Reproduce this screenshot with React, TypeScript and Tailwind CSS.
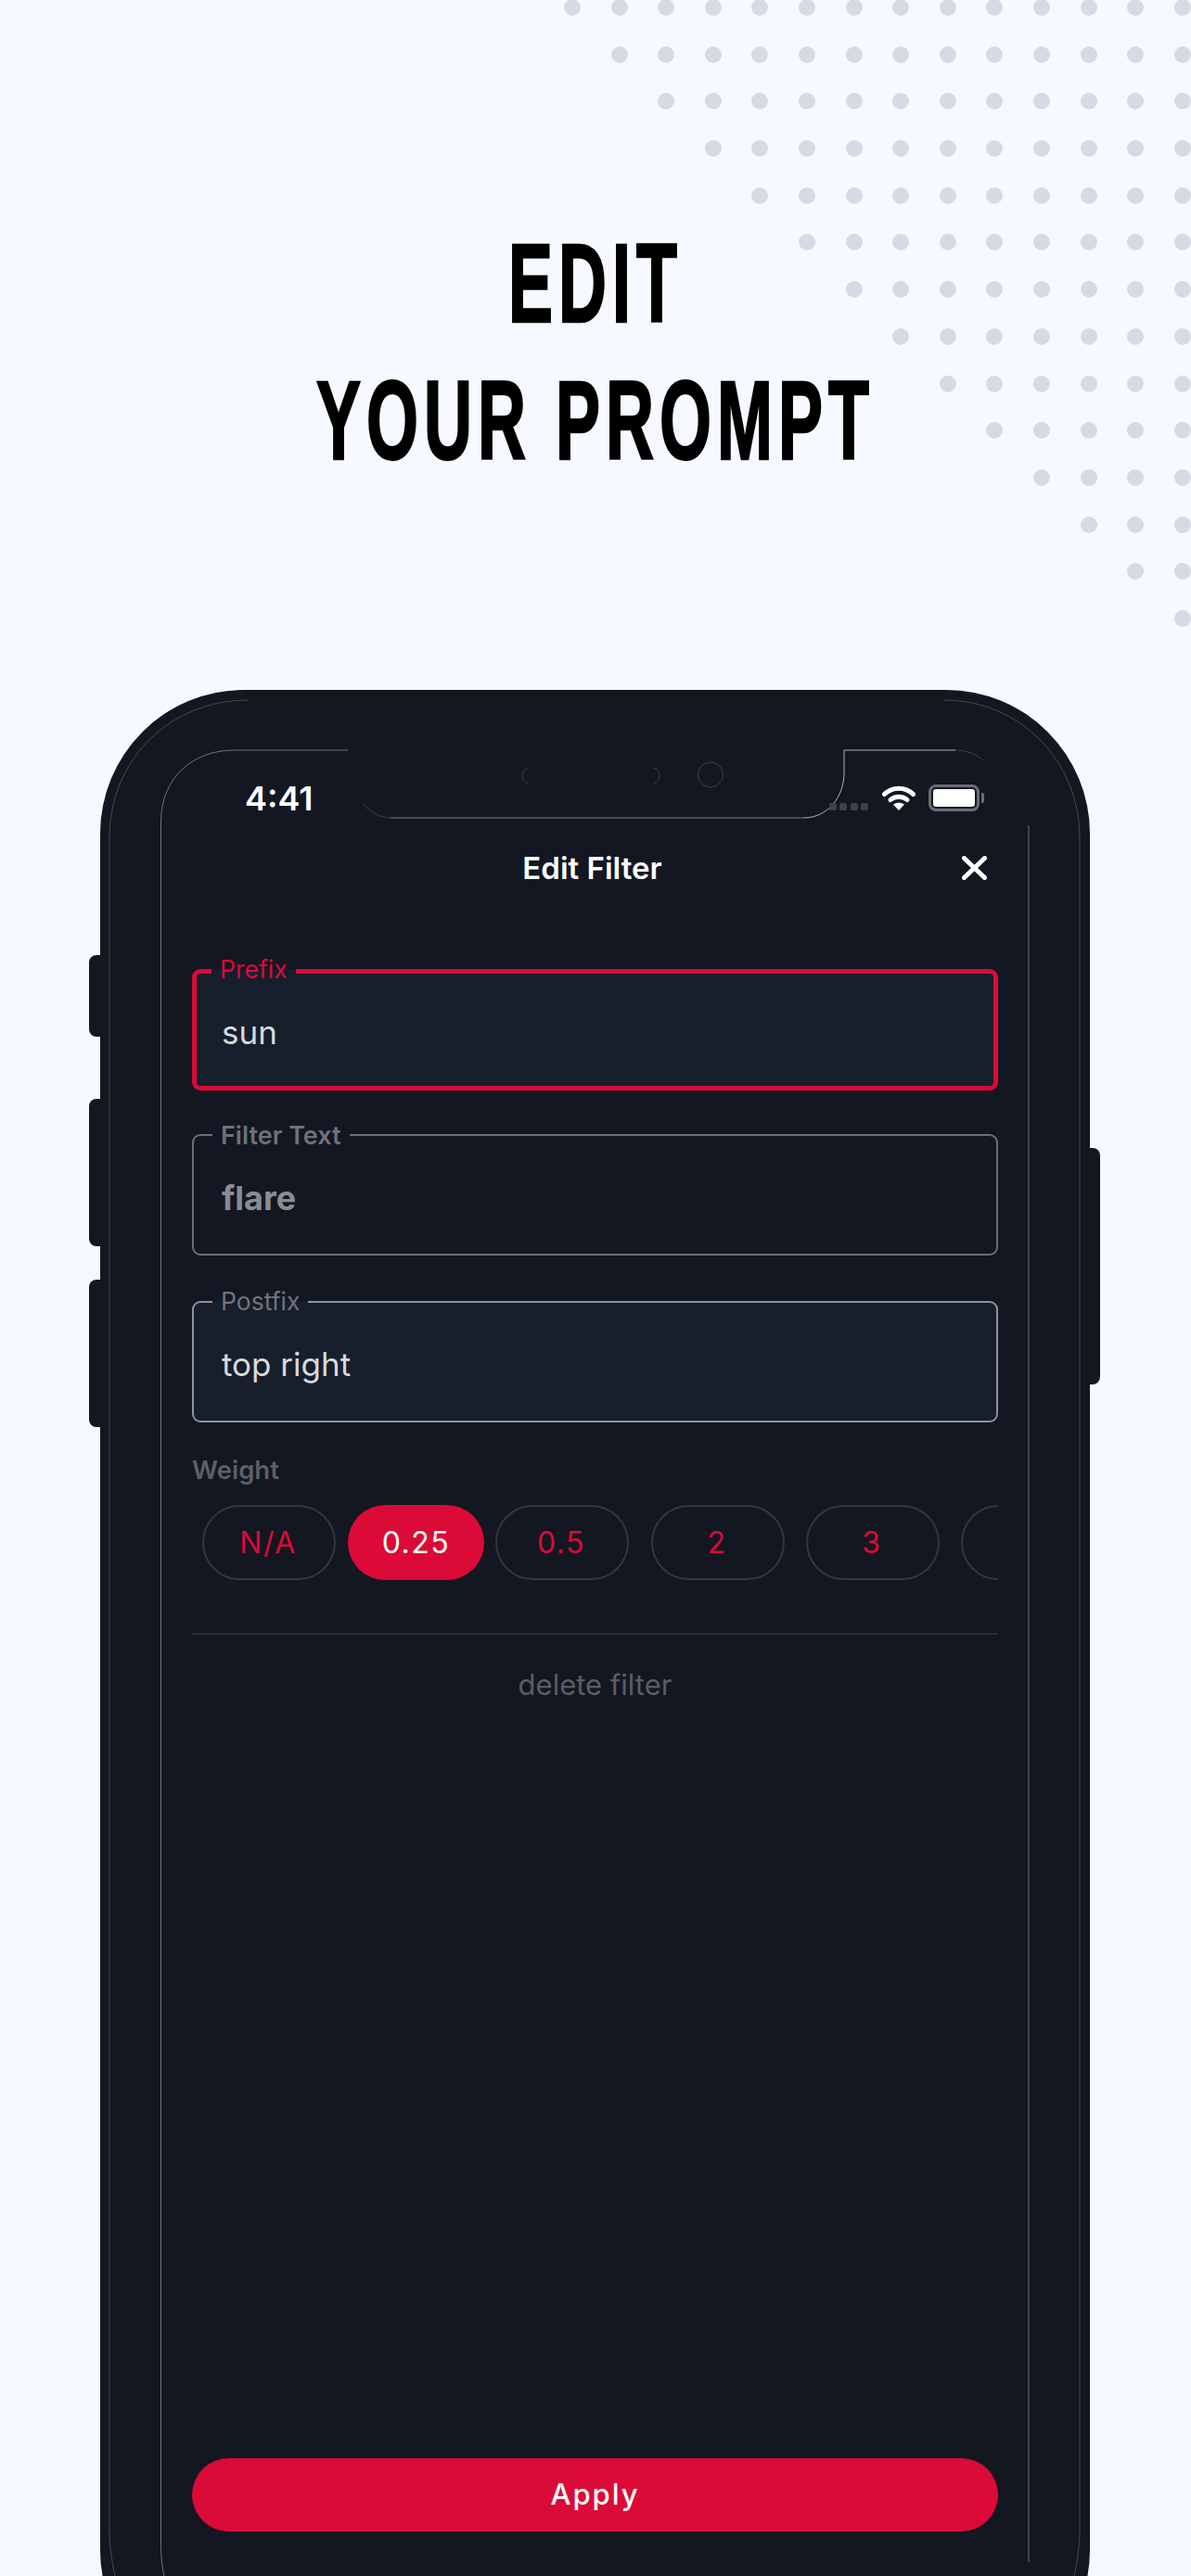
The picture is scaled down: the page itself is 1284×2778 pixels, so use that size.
import React from "react";

const red = "#dc0a36";

function DotField() {
  const cells: React.ReactNode[] = [];
  for (let r = 0; r < 14; r++) {
    for (let c = 0; c < 14; c++) {
      cells.push(
        <span key={`${r}-${c}`} className={c >= r ? "w-[18px] h-[18px] rounded-full bg-[#d7dae5]" : "w-[18px] h-[18px]"} />
      );
    }
  }
  return (
    <div className="absolute top-[-1px] left-[608px] grid grid-cols-[repeat(14,18px)] gap-x-[32.6px] gap-y-[32.7px]">
      {cells}
    </div>
  );
}

function Wifi() {
  return (
    <svg width="36" height="27" viewBox="0 0 36 27" fill="none">
      <path d="M2.5 9.5 C11 1 25 1 33.5 9.5" stroke="#fff" strokeWidth="5" strokeLinecap="round" />
      <path d="M9 15.5 C14 11 22 11 27 15.5" stroke="#fff" strokeWidth="5" strokeLinecap="round" />
      <path d="M18 27 L12 20.5 C15.5 18 20.5 18 24 20.5 Z" fill="#fff" />
    </svg>
  );
}

function Battery() {
  return (
    <div className="flex items-center gap-[2px]">
      <div className="w-[55px] h-[29px] rounded-[8px] border-[3px] border-[#6a6c75] p-[2px]">
        <div className="w-full h-full rounded-[3px] bg-white" />
      </div>
      <div className="w-[3px] h-[11px] rounded-r-[2px] bg-[#6a6c75]" />
    </div>
  );
}

function PhoneLines() {
  return (
    <svg className="absolute left-0 top-0 pointer-events-none" width="1067" height="2034" viewBox="0 0 1067 2034" fill="none">
      <path d="M16 2034 C12 2015 10 2000 10 1985 V160 C10 75 75 11 160 11" stroke="#454954" strokeWidth="1" />
      <path d="M1050 2034 C1054 2015 1056 2000 1056 1985 V160 C1056 75 990 11 910 11" stroke="#454954" strokeWidth="1" />
      <path d="M69 2034 C67 2025 65.5 2015 65.5 2000 V142 C65.5 95 100 65 144 65 H267" stroke="#6f737d" strokeWidth="1" />
      <path d="M283 123 C292 132 302 138 313 138" stroke="#3d4049" strokeWidth="1" />
      <path d="M313 138 H758" stroke="#7b7e87" strokeWidth="1" />
      <path d="M758 138 C785 138 802 115 802 89 V65 H922" stroke="#aeb1b8" strokeWidth="1" />
      <path d="M922 65 C935 65 945 70 952 76" stroke="#3d4049" strokeWidth="1" />
      <path d="M1001 146 V2019" stroke="#6f737d" strokeWidth="1" />
      <path d="M461 84 A9 9 0 0 0 461 101" stroke="#3d4049" strokeWidth="1" />
      <path d="M597 84 A9 9 0 0 1 597 101" stroke="#3d4049" strokeWidth="1" />
      <circle cx="658" cy="91.5" r="13.5" stroke="#3d4049" strokeWidth="1" />
    </svg>
  );
}

function Field({
  label,
  value,
  boxClass,
  labelClass,
  valueClass,
}: {
  label: string;
  value: string;
  boxClass: string;
  labelClass: string;
  valueClass: string;
}) {
  return (
    <div className={`relative h-[131px] rounded-[9px] flex items-center pt-[6px] ${boxClass}`}>
      <span className={`absolute h-[32px] px-[9px] flex items-center leading-none ${labelClass}`}>
        {label}
      </span>
      <span className={`leading-none ${valueClass}`}>{value}</span>
    </div>
  );
}

export default function App() {
  return (
    <div className="relative w-[1284px] h-[2778px] overflow-hidden bg-[#f6f9ff] font-['Inter',sans-serif]">
      <DotField />

      <h1 className="relative pt-[231px] text-center text-black font-bold text-[120px] leading-[148px] font-['Liberation_Sans_Narrow','Liberation_Sans',sans-serif]">
        <span className="block scale-x-[0.6] tracking-[10px] [-webkit-text-stroke:2.5px_black]">EDIT</span>
        <span className="block scale-x-[0.6] tracking-[10px] [-webkit-text-stroke:2.5px_black]">YOUR PROMPT</span>
      </h1>

      <div className="relative ml-[96px] mt-[217px] w-[1090px]">
        {/* side buttons */}
        <div className="absolute left-0 top-[286px] w-[14px] h-[88px] rounded-l-[8px] bg-[#131722]" />
        <div className="absolute left-0 top-[441px] w-[14px] h-[159px] rounded-l-[8px] bg-[#131722]" />
        <div className="absolute left-0 top-[636px] w-[14px] h-[159px] rounded-l-[8px] bg-[#131722]" />
        <div className="absolute right-0 top-[494px] w-[14px] h-[255px] rounded-r-[8px] bg-[#131722]" />

        <div className="relative ml-[12px] w-[1067px] h-[2161px] rounded-[155px] bg-[#131722] pt-[96px] pl-[99px] pr-[99px]">
          <PhoneLines />

          <div className="relative h-[40px] flex items-center justify-between mr-[15px]">
            <span className="ml-[57px] mt-[2px] text-white font-semibold text-[36px] leading-none">4:41</span>
            <div className="flex items-center">
              <div className="flex items-center gap-[3.5px] mr-[15px] mt-[20px]">
                <span className="w-[8px] h-[8px] rounded-[2px] bg-[#3f4049]" />
                <span className="w-[8px] h-[8px] rounded-[2px] bg-[#3f4049]" />
                <span className="w-[8px] h-[8px] rounded-[2px] bg-[#3f4049]" />
                <span className="w-[8px] h-[8px] rounded-[2px] bg-[#3f4049]" />
              </div>
              <Wifi />
              <div className="ml-[14px]">
                <Battery />
              </div>
            </div>
          </div>

          <div className="relative mt-[36px] h-[40px] flex items-center justify-center">
            <span className="text-white font-semibold text-[33px] leading-none -ml-[6px]">Edit Filter</span>
            <svg className="absolute right-[12px] top-[7px]" width="27" height="26" viewBox="0 0 27 26" fill="none">
              <path d="M2.5 2.5 L24.5 23.5 M24.5 2.5 L2.5 23.5" stroke="#fff" strokeWidth="5" strokeLinecap="round" />
            </svg>
          </div>

          <div className="relative mt-[89px] flex flex-col">
            <Field
              label="Prefix"
              value="sun"
              boxClass="border-[5px] border-[#dc0a36] bg-[#171e2c] pl-[27px]"
              labelClass="left-[16px] top-[-21px] text-[26.5px] text-[#dc0a36] bg-[linear-gradient(#131722_50%,#171e2c_50%)]"
              valueClass="text-[35px] text-[#d8d9dc]"
            />
            <Field
              label="Filter Text"
              value="flare"
              boxClass="mt-[47px] border-2 border-[#6b6e76] pl-[30px]"
              labelClass="left-[20px] top-[-17px] text-[27px] text-[#6e7178] font-semibold bg-[#131722]"
              valueClass="text-[36px] text-[#8a8c92] font-bold"
            />
            <Field
              label="Postfix"
              value="top right"
              boxClass="mt-[49px] border-2 border-[#8f939b] bg-[#171e2c] pl-[30px]"
              labelClass="left-[20px] top-[-18px] text-[26.5px] text-[#71747b] bg-[linear-gradient(#131722_50%,#171e2c_50%)]"
              valueClass="text-[35px] text-[#d8d9dc]"
            />

            <div className="mt-[35px] h-[34px] flex items-center text-[27.5px] font-semibold text-[#5f5f63]">Weight</div>

            <div className="mt-[20px] h-[81px] overflow-hidden flex pl-[11px]">
              <Pill label="N/A" />
              <div className="ml-[13px] shrink-0 w-[147px] h-[81px] rounded-full bg-[#dc0a36] flex items-center justify-center text-white text-[32px] tracking-[1.5px]">
                0.25
              </div>
              <Pill label="0.5" className="ml-[12px]" />
              <Pill label="2" className="ml-[24px]" />
              <Pill label="3" className="ml-[23px]" />
              <Pill label="" className="ml-[23px]" />
            </div>

            <div className="mt-[57px] h-[2px] bg-[#2f2e2c]" />

            <div className="mt-[34px] h-[40px] flex items-center justify-center text-[31px] text-[#5b5d63]">delete filter</div>

            <button
              className="mt-[814px] h-[79px] rounded-full flex items-center justify-center text-white text-[31px] font-medium tracking-[2px]"
              style={{ backgroundColor: red }}
            >
              Apply
            </button>
          </div>
        </div>
      </div>
    </div>
  );
}

function Pill({ label, className = "" }: { label: string; className?: string }) {
  return (
    <div className={`shrink-0 w-[144px] h-[81px] rounded-full border-2 border-[#33363f] flex items-center justify-center pr-[2px] text-[#dc0a36] text-[32px] tracking-[1.5px] ${className}`}>
      {label}
    </div>
  );
}
